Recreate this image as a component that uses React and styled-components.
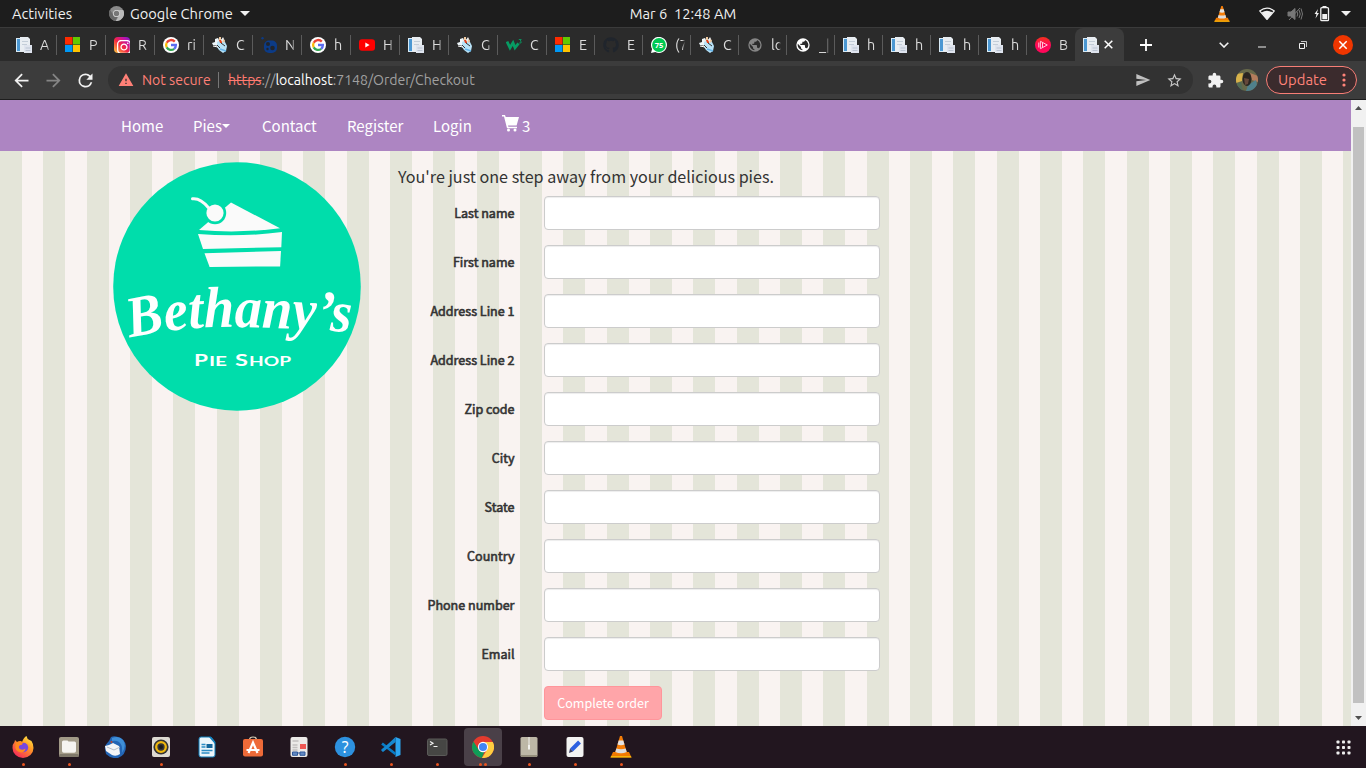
import React from "react";
import styled, { createGlobalStyle } from "styled-components";
import { FaGithub, FaInstagram } from "react-icons/fa";

const GlobalStyle = createGlobalStyle`
  * { box-sizing: border-box; }
  body { margin: 0; overflow: hidden; }
  svg { display: block; flex: none; }
`;

const uiFont = `Ubuntu, "Noto Sans", "Open Sans", sans-serif`;
const siteFont = `"Source Sans Pro", "Noto Sans CJK JP", sans-serif`;

const Desktop = styled.div`
  width: 1366px;
  height: 768px;
  display: flex;
  flex-direction: column;
  overflow: hidden;
  font-family: ${uiFont};
`;

/* ---------- system bar ---------- */
const SystemBar = styled.header`
  height: 27px;
  flex: none;
  background: #1d1d1d;
  color: #f0f0f0;
  display: grid;
  grid-template-columns: 1fr auto 1fr;
  align-items: center;
  font-size: 14.67px;
  line-height: 26px;
  white-space: pre;
`;
const SystemGroup = styled.div`
  display: flex;
  align-items: center;
  height: 27px;
`;
const Activities = styled.span`
  width: 97px;
  padding-left: 12px;
`;
const AppMenu = styled.span`
  margin: 0 5px 0 6px;
  width: 105px;
`;
const Tray = styled.div`
  display: flex;
  justify-content: flex-end;
  align-items: center;
  padding-right: 15px;
  height: 27px;
`;
const TrayItem = styled.span`
  margin-left: ${(p) => p.$gap}px;
`;

/* ---------- browser tabs ---------- */
const TabStrip = styled.div`
  height: 34px;
  flex: none;
  display: flex;
  padding-left: 8px;
  background: #2b2b2b;
  border-top: 1px solid #3b3b3b;
`;
const Tab = styled.div`
  width: ${(p) => p.$width}px;
  height: 33px;
  display: flex;
  align-items: center;
  padding: 0 0 0 8px;
  flex: none;
`;
const TabTitle = styled.span`
  margin-left: 8px;
  width: 10px;
  overflow: hidden;
  white-space: nowrap;
  color: #dcdcdc;
  font-size: 14.4px;
  line-height: 20px;
  mask-image: linear-gradient(to right, #000 70%, transparent);
`;
const TabDivider = styled.i`
  width: 1px;
  height: 20px;
  margin-left: auto;
  background: #5b5b5b;
`;
const ActiveTab = styled.div`
  width: 49px;
  height: 33px;
  flex: none;
  display: flex;
  align-items: center;
  gap: 5px;
  padding-left: 8px;
  background: #3c3c3c;
  border-radius: 8px 8px 0 0;
`;
const WindowControls = styled.div`
  flex: 1;
  display: flex;
  align-items: center;
  padding-left: 16px;
`;
const ControlGap = styled.span`
  width: ${(p) => p.$w}px;
`;

/* ---------- toolbar ---------- */
const Toolbar = styled.div`
  height: 39px;
  flex: none;
  display: flex;
  align-items: center;
  background: #3c3c3c;
  border-bottom: 1px solid #1e1e1e;
  padding-left: 11px;
  font-size: 14.1px;
`;
const NavButtons = styled.div`
  width: 97px;
  display: flex;
  gap: 11px;
`;
const Omnibox = styled.div`
  width: 1085px;
  height: 28px;
  border-radius: 14px;
  background: #323232;
  display: flex;
  align-items: center;
  padding: 0 10px 0 10px;
  line-height: 28px;
`;
const NotSecure = styled.span`
  width: 76px;
  margin-left: 8px;
  color: #ff8077;
`;
const OmniDivider = styled.i`
  width: 1px;
  height: 16px;
  margin-right: 9px;
  background: #777;
`;
const Url = styled.span`
  flex: 1;
  color: #a0a0a0;
`;
const Scheme = styled.span`
  color: #ff7a70;
  text-decoration: line-through;
`;
const Host = styled.span`
  color: #fff;
`;
const UpdateButton = styled.button`
  width: 91px;
  height: 28px;
  padding: 0 10px 0 11px;
  display: flex;
  align-items: center;
  justify-content: space-between;
  border: 1px solid #f77e76;
  border-radius: 14px;
  background: #3b2b2d;
  color: #ff8379;
  font: 14.8px/24px ${uiFont};
  margin-left: 8px;
`;

/* ---------- page ---------- */
const Viewport = styled.main`
  height: 626px;
  flex: none;
  display: flex;
`;
const Page = styled.div`
  width: 1351px;
  height: 626px;
  font-family: ${siteFont};
  background: linear-gradient(
      to right,
      #e4e5d9 22px, #f9f3f1 22px 43px, #e4e5d9 43px 65px, #f9f3f1 65px 87px,
      #e4e5d9 87px 109px, #f9f3f1 109px
    ) 0 0 / 130px 100%;
`;
const SiteNav = styled.nav`
  height: 51px;
  background: #ad85c2;
  display: flex;
  padding-left: 106px;
`;
const NavLink = styled.a`
  width: ${(p) => p.$width}px;
  padding: 0 15px;
  display: flex;
  align-items: center;
  white-space: nowrap;
  color: #fff;
  font-size: 15px;
  line-height: 51px;
`;
const CartIcon = styled.svg`
  margin: 0 3px 4px 0;
`;
const Columns = styled.div`
  display: flex;
  padding: 11px 0 0 113px;
`;
const Checkout = styled.section`
  margin-left: 37px;
  width: 482px;
`;
const Lead = styled.h4`
  margin: 0;
  height: 34px;
  font-size: 16.13px;
  line-height: 29px;
  font-weight: 400;
  color: #333;
  white-space: nowrap;
`;
const FormRow = styled.div`
  display: grid;
  grid-template-columns: 116.5px 336px;
  column-gap: 29.5px;
  height: 34px;
  margin-bottom: 15px;
`;
const Label = styled.label`
  text-align: right;
  font-size: 12.55px;
  line-height: 34px;
  font-weight: 400;
  color: #333;
  -webkit-text-stroke: 0.6px #333;
  white-space: nowrap;
`;
const Input = styled.input`
  width: 336px;
  height: 34px;
  border: 1px solid #ccc;
  border-radius: 4px;
  background: #fff;
  box-shadow: inset 0 1px 1px rgba(0, 0, 0, 0.075);
`;
const Submit = styled.button`
  grid-column: 2;
  width: 118px;
  height: 34px;
  padding: 0;
  border: 1px solid #ff959b;
  border-radius: 4px;
  background: #ffa5a9;
  color: #fff;
  font: 12.55px/32px ${siteFont};
`;
const Scrollbar = styled.div`
  width: 15px;
  background: #f1f1f1;
  display: flex;
  flex-direction: column;
  align-items: center;
  padding: 6px 0;
`;
const Thumb = styled.div`
  width: 11px;
  height: 576px;
  flex: none;
  margin: 17px 0 13px;
  background: #c1c1c1;
`;

/* ---------- dock ---------- */
const Dock = styled.footer`
  height: 42px;
  flex: none;
  display: flex;
  align-items: center;
  padding: 0 15px 0 4px;
  gap: 8px;
  background: #22161f;
`;
const DockItem = styled.div`
  width: 38px;
  height: 38px;
  padding-top: 8px;
  display: flex;
  flex-direction: column;
  align-items: center;
  border-radius: 4px;
  background: ${(p) => (p.$active ? "#4a4048" : "transparent")};
`;
const Dots = styled.span`
  display: flex;
  gap: 2px;
  margin-top: 5px;
`;
const Dot = styled.i`
  width: 3px;
  height: 3px;
  border-radius: 50%;
  background: #e95420;
`;
const Spacer = styled.span`
  flex: 1;
`;

/* ---------- small glyphs ---------- */
const Glyph = ({ d, size, color = "#f1f1f1" }) => (
  <svg width={size} height={size} viewBox="0 0 24 24" fill={color}><path d={d} /></svg>
);
const paths = {
  back: "M20 11H7.83l5.59-5.59L12 4l-8 8 8 8 1.41-1.41L7.83 13H20z",
  forward: "M4 11h12.17l-5.59-5.59L12 4l8 8-8 8-1.41-1.41L16.17 13H4z",
  reload: "M17.65 6.35A7.96 7.96 0 0 0 12 4a8 8 0 1 0 7.73 10h-2.08A6 6 0 1 1 12 6c1.66 0 3.14.69 4.22 1.78L13 11h7V4z",
  warning: "M1 21h22L12 2zm12-3h-2v-2h2zm0-4h-2v-4h2z",
  puzzle: "M20.5 11H19V7c0-1.1-.9-2-2-2h-4V3.5a2.5 2.5 0 0 0-5 0V5H4c-1.1 0-2 .9-2 2v3.8h1.5a2.7 2.7 0 0 1 0 5.4H2V20c0 1.1.9 2 2 2h3.8v-1.5a2.7 2.7 0 0 1 5.4 0V22H17c1.1 0 2-.9 2-2v-4h1.5a2.5 2.5 0 0 0 0-5z",
  star: "M22 9.24l-7.19-.62L12 2 9.19 8.63 2 9.24l5.46 4.73L5.82 21 12 17.27 18.18 21l-1.63-7.03zM12 15.4l-3.76 2.27 1-4.28-3.32-2.88 4.38-.38L12 6.1l1.71 4.04 4.38.38-3.32 2.88 1 4.28z",
  send: "M2 21L23 12 2 3v7l15 2-15 2z",
  globe: "M12 2a10 10 0 1 0 0 20 10 10 0 0 0 0-20zm-1 17.93A8 8 0 0 1 4.21 10.2L9 15v1c0 1.1.9 2 2 2zm6.9-2.54A2 2 0 0 0 16 16h-1v-3c0-.55-.45-1-1-1H8v-2h2c.55 0 1-.45 1-1V7h2c1.1 0 2-.9 2-2v-.41a8 8 0 0 1 2.9 12.8z",
};

const Triangle = ({ width = 10, height = 5, color = "#f1f1f1", up = false }) => (
  <svg width={width} height={height} viewBox="0 0 10 5" preserveAspectRatio="none">
    <path d={up ? "M0 5h10L5 0z" : "M0 0h10L5 5z"} fill={color} />
  </svg>
);
const Cone = ({ size }) => (
  <svg width={size} height={size} viewBox="0 0 22 22">
    <path d="M3 16h16l2.500 5.500H.5z" fill="#ef7900" />
    <path d="M1 20h20l.5 1.600H.5z" fill="#f6b50a" />
    <path d="M10 0h2l5 17q-6 3-12 0z" fill="#f47d08" />
    <path d="M8.700 4.600h4.600l1.200 4q-3.500 1.200-7 0z" fill="#e4e4e4" />
    <path d="M6.300 12.500q4.700 1.400 9.400 0l1 3.500q-5.700 2.400-11.400 0z" fill="#dcdcdc" />
  </svg>
);
const ChromeMark = ({ size, mono }) => {
  const c = mono ? ["#8a8a8a", "#686868", "#b9b9b9", "#777", "#ddd"] : ["#e33b2e", "#0f9d58", "#ffcd40", "#4285f4", "#fff"];
  return (
    <svg width={size} height={size} viewBox="0 0 24 24">
      <circle cx="12" cy="12" r="12" fill={c[0]} />
      <path d="M1.600 6L7.300 15A5.500 5.500 0 0 0 13.500 17.300L10.800 23.950A12 12 0 0 1 1.600 6z" fill={c[1]} />
      <path d="M12 6.500H22.700A12 12 0 0 1 10.800 23.950L16.700 14.800A5.500 5.500 0 0 0 12 6.500z" fill={c[2]} />
      <circle cx="12" cy="12" r="5.600" fill={c[4]} />
      <circle cx="12" cy="12" r="4.400" fill={c[3]} />
    </svg>
  );
};

/* ---------- favicons ---------- */
const Pages = () => (
  <svg width="16" height="16" viewBox="0 0 16 16">
    <path d="M0 1h5v14H0z" fill="#d9ebf6" />
    <path d="M1 2h3v12H1z" fill="#4b97d2" />
    <path d="M4 0h8l2 2v13H4z" fill="#e8edf2" />
    <path d="M6 4h6v1H6zM6 7h5v1H6z" fill="#c3cdd8" />
    <path d="M8 8h8v8H8z" fill="#dfe4ee" />
    <path d="M9.500 10.500h5v1h-5zM9.500 13h5v1h-5z" fill="#b9c3d1" />
  </svg>
);
const Squares = () => (
  <svg width="16" height="16" viewBox="0 0 16 16">
    <path d="M0 0h7.500v7.500H0z" fill="#ff2b00" /><path d="M8 0h7v7.500H8z" fill="#62c900" />
    <path d="M0 8h7.500v7H0z" fill="#0098f5" /><path d="M8 8h7v7H8z" fill="#ffc400" />
  </svg>
);
const Insta = () => (
  <svg width="16" height="16" viewBox="0 0 16 16">
    <defs><linearGradient id="ig" x1="0" y1="1" x2="1" y2="0"><stop stopColor="#ffd13f" /><stop offset=".45" stopColor="#f5273f" /><stop offset=".75" stopColor="#c512a4" /><stop offset="1" stopColor="#6d20d0" /></linearGradient></defs>
    <rect width="16" height="16" rx="4" fill="url(#ig)" />
    <FaInstagram x="2" y="2" width="12" height="12" color="#fff" />
  </svg>
);
const Gmark = () => (
  <svg width="16" height="16" viewBox="0 0 16 16" fill="none" strokeWidth="2.300">
    <circle cx="8" cy="8" r="8" fill="#fff" />
    <path d="M11.800 4.600A5 5 0 0 0 3.700 5.700" stroke="#ea4335" />
    <path d="M3.700 5.700a5 5 0 0 0 0 4.700" stroke="#fbbc05" />
    <path d="M3.700 10.400a5 5 0 0 0 7.500 1.400" stroke="#34a853" />
    <path d="M8 8h4.900a5 5 0 0 1-1.700 3.800" stroke="#5b6df0" />
  </svg>
);
const Genie = () => (
  <svg width="16" height="16" viewBox="0 0 16 16">
    <path d="M3 2l3-1 1 3-1 5-5-1-1-2 3-1z" fill="#eef6fa" />
    <path d="M5 5l3-3 4 1 3 6-1 5-3 2-4-3-2-3z" fill="#b8e2f7" />
    <path d="M7 0h2v3H7zM11 2l2 1-1 3-2-2z" fill="#f0c9a0" />
    <path d="M7 3h3v3H8z" fill="#e2411b" /><path d="M6 1l1 3-2 1zM11 0l1 2-2 3-1-2z" fill="#eee" />
    <path d="M9 6l4 3M5 8l3 3" stroke="#333" /><path d="M8 12l6 2" stroke="#65b5ea" strokeWidth="1.500" />
    <path d="M1 9l5 1" stroke="#fff" />
  </svg>
);
const Paw = () => (
  <svg width="16" height="16" viewBox="0 0 16 16">
    <rect x="3" y="3.500" width="13" height="12.500" rx="5" fill="#0c3b86" />
    <circle cx="1.500" cy="1.200" r="1.200" fill="#0c3b86" />
    <circle cx="7" cy="7" r="2" fill="#20242c" /><circle cx="11.500" cy="11" r="2.300" fill="#20242c" /><circle cx="6.500" cy="12" r="1.200" fill="#20242c" />
  </svg>
);
const Tube = () => (
  <svg width="16" height="16" viewBox="0 0 16 16"><rect y="2.300" width="16" height="11.400" rx="3" fill="#f00" /><path d="M6.300 5.600v4.800L10.600 8z" fill="#fff" /></svg>
);
const W3 = () => (
  <svg width="16" height="16" viewBox="0 0 16 16" fill="none" stroke="#079b63">
    <path d="M1 4.500l3 6.300 3-5 2 5 3.500-4.500" strokeWidth="2.800" /><path d="M12.800 2.500h2.400l-1 1.500 1 .6-.3 1.400h-1.700" strokeWidth=".9" />
  </svg>
);
const Hub = () => <FaGithub size={16} color="#20252c" />;
const Chat = () => (
  <svg width="16" height="16" viewBox="0 0 16 16">
    <path d="M0 16l1.100-4A8 8 0 1 1 4.300 15z" fill="#fff" /><circle cx="8" cy="8" r="6.900" fill="#00c853" />
    <text x="8" y="10.800" textAnchor="middle" fontFamily="Noto Sans" fontWeight="700" fontSize="7.500" fill="#fff">75</text>
  </svg>
);
const GlobeDim = () => <Glyph d={paths.globe} size={16} color="#858585" />;
const Globe = () => <Glyph d={paths.globe} size={16} color="#fff" />;
const Play = () => (
  <svg width="16" height="16" viewBox="0 0 16 16" fill="none">
    <defs><linearGradient id="pl" x2="0" y2="1"><stop stopColor="#f5311c" /><stop offset=".5" stopColor="#ff0759" /></linearGradient></defs>
    <circle cx="8" cy="8" r="8" fill="url(#pl)" />
    <path d="M5.400 4.300v7.400L12.300 8zM7.500 5.500v5M3.800 5.500v5" stroke="#ffc7da" strokeWidth="1" />
  </svg>
);

const tabs = [
  [Pages, "A"], [Squares, "P"], [Insta, "R"], [Gmark, "ri"], [Genie, "C"], [Paw, "N"], [Gmark, "h"], [Tube, "H"],
  [Pages, "H"], [Genie, "G"], [W3, "C"], [Squares, "E"], [Hub, "E"], [Chat, "(7"], [Genie, "C"], [GlobeDim, "lo"],
  [Globe, "_|"], [Pages, "h"], [Pages, "h"], [Pages, "h"], [Pages, "h"], [Play, "B"],
];

/* ---------- dock icons ---------- */
const Icon = ({ children }) => <svg width="22" height="22" viewBox="0 0 22 22">{children}</svg>;
const Firefox = () => (
  <Icon>
    <defs><linearGradient id="ff" x1=".9" y1="0" x2=".2" y2="1"><stop stopColor="#fff04a" /><stop offset=".4" stopColor="#ff9a25" /><stop offset="1" stopColor="#f5225d" /></linearGradient></defs>
    <path d="M3 4l2 2q2-1 4-1l1 1q2-5 4.500-6 .5 3 3 4l2 1q2 3 2 7a10.300 9.800 0 0 1-21 0q0-4 2-6z" fill="url(#ff)" />
    <circle cx="11.500" cy="11.500" r="4.700" fill="#7647df" />
    <path d="M4 6.500q4-2 7 0l-1 2.200q-3 0-3.500 2 .6 3 4 3 2-.4 3-1.200-.6 4-4.700 4-5-1-5.500-5z" fill="#ff8a20" />
  </Icon>
);
const Files = () => (
  <Icon>
    <rect x="1" y="1" width="20" height="20" rx="2" fill="#a29a87" /><rect x="1" y="18" width="20" height="3" rx="1.500" fill="#80796a" />
    <path d="M4 6q0-1.500 1.500-1.500h4l1 1h6q1.500 0 1.500 1.500v8q0 1.800-1.800 1.800H5.800Q4 16.800 4 15z" fill="#f6f4f0" />
  </Icon>
);
const Thunderbird = () => (
  <Icon>
    <path d="M7 1q3-1.500 7 0 7 2 8 9 0 9-8 12-7 1-12-4l-1-5Q0 10 5 5z" fill="#2365b5" />
    <path d="M8 2q7-3 11 2 4 6-1 13 1-8-3-11-3-2-7-1z" fill="#3f8fd8" />
    <path d="M1 10l4-1 4-2 6 3 1 8q-4 3-8 1L2 15z" fill="#f4f5f7" />
    <path d="M3 11l7 3 6-3" stroke="#b6bdc8" fill="none" /><circle cx="7.500" cy="6" r="1" fill="#c4432b" />
  </Icon>
);
const Speaker = () => (
  <Icon>
    <rect x="2" y="1" width="18" height="20" rx="2" fill="#dedad2" /><circle cx="11" cy="11" r="7.600" fill="#343434" />
    <circle cx="11" cy="11" r="4.800" fill="none" stroke="#efb70d" strokeWidth="2.300" /><circle cx="11" cy="11" r="2" fill="#191919" />
  </Icon>
);
const Writer = () => (
  <Icon>
    <path d="M3 3q0-2 2-2h10l4 5v13q0 2-2 2H5q-2 0-2-2z" fill="#edf5fa" stroke="#0d7cb9" strokeWidth="1" /><path d="M13 1h2l4 5v2z" fill="#0d7cb9" />
    <path d="M5.500 8.500h4M5.500 11h4M5.500 14.500h11M5.500 17h8" stroke="#2b8cc4" strokeWidth="1.400" /><path d="M10.500 8h6v4h-6z" fill="#12659b" />
  </Icon>
);
const Store = () => (
  <Icon>
    <path d="M7.500 4q0-3 3.500-3t3.500 3" stroke="#d9d0b8" fill="none" strokeWidth="1.200" /><rect x="1" y="3" width="20" height="17.500" rx="2" fill="#ee6a38" />
    <path d="M6.500 17L11 6.500 15.500 17M4.500 14h13" stroke="#fff" strokeWidth="2.200" fill="none" />
  </Icon>
);
const Reader = () => (
  <Icon>
    <rect x="2.500" y="1" width="17" height="20" rx="2" fill="#eceae8" /><path d="M4.500 5h6M4.500 9h5M4.500 11.500h5M4.500 14h5" stroke="#c2c0be" strokeWidth="1.300" />
    <path d="M12 8h6v5h-6z" fill="#ee5753" /><path d="M4.500 16h5v3.300h-5zM12 16h5v3.300h-5z" fill="#638ac4" stroke="#30599a" /><path d="M9.500 17H12" stroke="#30599a" />
  </Icon>
);
const Help = () => (
  <Icon>
    <circle cx="11" cy="11" r="10.200" fill="#2d91df" /><text x="11" y="16.500" textAnchor="middle" fontFamily="Noto Sans" fontSize="15.500" fill="#fff">?</text>
  </Icon>
);
const Code = () => (
  <Icon>
    <path d="M15.500 1l5 2v16l-5 2z" fill="#2ba5f0" /><path d="M2 7.500L15.500 18M2 14.500L15.500 4" stroke="#087bc4" strokeWidth="2.700" />
    <path d="M15.500 1v5L3 16l-1.800-1.500z" fill="#1688cf" />
  </Icon>
);
const Terminal = () => (
  <Icon>
    <rect x="1.500" y="3" width="19.500" height="16.500" rx="1.500" fill="#464644" stroke="#5b5b59" /><path d="M4 5.500l3 1.700-3 1.700M7.500 10.500h4" stroke="#f0f0f0" fill="none" strokeWidth="1.200" />
  </Icon>
);
const Archive = () => (
  <Icon>
    <rect x="2.500" y="1" width="17" height="20" rx="1.500" fill="#bdb7a6" /><path d="M3 20h16" stroke="#958e7c" strokeWidth="2" />
    <path d="M11 1.500v9" stroke="#f3f2ee" strokeWidth="2" strokeDasharray="1 1" /><path d="M10 9h2v4.500h-2z" fill="#f3f2ee" />
  </Icon>
);
const Editor = () => (
  <Icon>
    <rect x="2.500" y="1" width="17" height="20" rx="2" fill="#f3f3f2" /><path d="M7.500 14l8-8" stroke="#2c5fe0" strokeWidth="4" /><path d="M6 12.500l3 3-4 1.500z" fill="#373d60" />
  </Icon>
);
const dock = [
  [Firefox, 1], [Files, 1], [Thunderbird, 0], [Speaker, 1], [Writer, 0], [Store, 0], [Reader, 0], [Help, 1],
  [Code, 1], [Terminal, 1], [() => <ChromeMark size={22} />, 2, true], [Archive, 1], [Editor, 1], [() => <Cone size={22} />, 1],
];

const Logo = () => (
  <svg width="248" height="249" viewBox="0 0 248 249">
    <ellipse cx="124" cy="124.500" rx="123.800" ry="124.200" fill="#00ddab" />
    <g fill="#fafafa">
      <path d="M86 68L118 40.500 167 66.300Q126 71.500 86 68z" />
      <path d="M85 72Q127 75.500 169 70l-.7 15.200L90 87z" />
      <path d="M91.500 91.200L168 89l-.9 15.400-70.500.6z" />
    </g>
    <circle cx="102" cy="51" r="11.200" fill="#00ddab" />
    <circle cx="102" cy="51" r="8.600" fill="#fafafa" />
    <path d="M79.500 36.800q8-1 16 9" fill="none" stroke="#fafafa" strokeWidth="3" strokeLinecap="round" />
    <path id="name-line" d="M17 176Q60 165 116 165T246 171" fill="none" />
    <text fontFamily="Z003, Liberation Serif, serif" fontStyle="italic" fontWeight="700" fontSize="58" fill="#fff">
      <textPath href="#name-line" textLength="222" lengthAdjust="spacingAndGlyphs">Bethany’s</textPath>
    </text>
    <g fontFamily="Lato, sans-serif" fontWeight="700" fill="#fff">
      <text x="81" y="204" fontSize="17.500" textLength="14" lengthAdjust="spacingAndGlyphs">P</text>
      <text x="96" y="204" fontSize="14" textLength="18" lengthAdjust="spacingAndGlyphs">IE</text>
      <text x="122" y="204" fontSize="17.500" textLength="13" lengthAdjust="spacingAndGlyphs">S</text>
      <text x="136" y="204" fontSize="14" textLength="42" lengthAdjust="spacingAndGlyphs">HOP</text>
    </g>
  </svg>
);

const fields = ["Last name", "First name", "Address Line 1", "Address Line 2", "Zip code", "City", "State", "Country", "Phone number", "Email"];

export default function App() {
  return (
    <Desktop>
      <GlobalStyle />
      <SystemBar>
        <SystemGroup>
          <Activities>Activities</Activities>
          <TrayItem $gap={12}><ChromeMark size={15} mono /></TrayItem>
          <AppMenu>Google Chrome</AppMenu>
          <Triangle />
        </SystemGroup>
        <span>Mar 6  12:48 AM</span>
        <Tray>
          <Cone size={16} />
          <TrayItem $gap={29}>
            <svg width="16" height="13" viewBox="0 0 16 13">
              <path d="M.7 4Q8-1.800 15.300 4L8 12.500z" fill="none" stroke="#f1f1f1" strokeWidth="1.200" /><path d="M2.500 5.500Q8 1.800 13.500 5.500L8 12.500z" fill="#f1f1f1" />
            </svg>
          </TrayItem>
          <TrayItem $gap={12}>
            <svg width="16" height="14" viewBox="0 0 16 14" fill="none" stroke="#777">
              <path d="M1 5h3l4-3.500v11L4 9H1z" fill="#777" /><path d="M10 4.500q1.500 2.500 0 5M12 3q2.500 4 0 8M14 1.500q3 5.500 0 11M2 13L13 1" />
            </svg>
          </TrayItem>
          <TrayItem $gap={11}>
            <svg width="16" height="17" viewBox="0 0 16 17">
              <path d="M4 4L.5 9h2L1.500 13.500 5 8H3z" fill="#f1f1f1" /><rect x="6.800" y="2.700" width="7.700" height="13" rx="1" fill="none" stroke="#f1f1f1" strokeWidth="1.300" />
              <path d="M8.500 1h4v1.500h-4zM8.300 9h4.800v5.200H8.300z" fill="#f1f1f1" />
            </svg>
          </TrayItem>
          <TrayItem $gap={11}><Triangle /></TrayItem>
        </Tray>
      </SystemBar>

      <TabStrip>
        {tabs.map(([Favicon, title], i) => (
          <Tab key={i} $width={i < 11 ? 49 : 48}>
            <Favicon />
            <TabTitle>{title}</TabTitle>
            {i < tabs.length - 1 && <TabDivider />}
          </Tab>
        ))}
        <ActiveTab>
          <Pages />
          <svg width="9" height="9" viewBox="0 0 9 9" stroke="#fff" strokeWidth="1.500"><path d="M.7.7l7.600 7.600M8.300.7L.7 8.300" /></svg>
        </ActiveTab>
        <WindowControls>
          <svg width="12" height="12" viewBox="0 0 12 12" stroke="#fff" strokeWidth="1.800"><path d="M6 0v12M0 6h12" /></svg>
          <ControlGap $w={67} />
          <svg width="10" height="6" viewBox="0 0 10 6" fill="none" stroke="#f1f1f1" strokeWidth="1.600"><path d="M.7.7L5 5 9.300.7" /></svg>
          <ControlGap $w={29} />
          <svg width="8" height="6" viewBox="0 0 8 6"><path d="M0 4.500h8v1H0z" fill="#f1f1f1" /></svg>
          <ControlGap $w={33} />
          <svg width="8" height="8" viewBox="0 0 8 8" fill="none" stroke="#f1f1f1"><path d="M.5 2.500h5v5h-5z" /><path d="M2 .5h5.500V6" strokeWidth=".8" /></svg>
          <ControlGap $w={26} />
          <svg width="20" height="20" viewBox="0 0 20 20"><circle cx="10" cy="10" r="10" fill="#f03600" /><path d="M6.300 6.300l7.400 7.400m0-7.400l-7.400 7.400" stroke="#fff" strokeWidth="1.500" /></svg>
        </WindowControls>
      </TabStrip>

      <Toolbar>
        <NavButtons>
          <Glyph d={paths.back} size={21} />
          <Glyph d={paths.forward} size={21} color="#858585" />
          <Glyph d={paths.reload} size={21} />
        </NavButtons>
        <Omnibox>
          <Glyph d={paths.warning} size={16} color="#ff8077" />
          <NotSecure>Not secure</NotSecure>
          <OmniDivider />
          <Url><Scheme>https</Scheme>://<Host>localhost</Host>:7148/Order/Checkout</Url>
          <Glyph d={paths.send} size={16} color="#c0c0c0" />
          <ControlGap $w={15} />
          <Glyph d={paths.star} size={17} color="#c8c8c8" />
        </Omnibox>
        <ControlGap $w={14} />
        <Glyph d={paths.puzzle} size={17} />
        <ControlGap $w={12} />
        <svg width="22" height="22" viewBox="0 0 22 22">
          <defs><clipPath id="face"><circle cx="11" cy="11" r="11" /></clipPath></defs>
          <g clipPath="url(#face)">
            <path d="M0 0h22v22H0z" fill="#67694a" /><path d="M0 5l7-1-1 8-6 2z" fill="#d8b24a" /><path d="M14 4l8 3v6l-6-2z" fill="#b47c5c" />
            <path d="M5 13l-5 2v7h7z" fill="#526b56" /><path d="M12 16l8-5 2 11H10z" fill="#4f808b" />
            <ellipse cx="11" cy="10" rx="4.500" ry="7" fill="#2a2521" /><path d="M8 9l5 1-1 5-3 1z" fill="#65483a" />
          </g>
        </svg>
        <UpdateButton>
          Update
          <svg width="4" height="14" viewBox="0 0 4 14" fill="#ff8379"><circle cx="2" cy="2" r="1.600" /><circle cx="2" cy="7" r="1.600" /><circle cx="2" cy="12" r="1.600" /></svg>
        </UpdateButton>
      </Toolbar>

      <Viewport>
        <Page>
          <SiteNav>
            <NavLink $width={72}>Home</NavLink>
            <NavLink $width={69}>Pies<Triangle width={8} height={4} color="#fff" /></NavLink>
            <NavLink $width={85}>Contact</NavLink>
            <NavLink $width={86}>Register</NavLink>
            <NavLink $width={69}>Login</NavLink>
            <NavLink $width={70}>
              <CartIcon width="17" height="17" viewBox="0 0 17 17" fill="#fff">
                <path d="M0 0h3l.7 2H17l-2.400 8.500H6l.4 1.300H15v1.500H5L2 1.500H0z" /><circle cx="6.500" cy="15" r="1.500" /><circle cx="13" cy="15" r="1.500" />
              </CartIcon>
              3
            </NavLink>
          </SiteNav>
          <Columns>
            <Logo />
            <Checkout>
              <Lead>You're just one step away from your delicious pies.</Lead>
              {fields.map((name) => (
                <FormRow key={name}>
                  <Label>{name}</Label>
                  <Input />
                </FormRow>
              ))}
              <FormRow><Submit>Complete order</Submit></FormRow>
            </Checkout>
          </Columns>
        </Page>
        <Scrollbar>
          <Triangle width={7} height={4} color="#505050" up />
          <Thumb />
          <Triangle width={7} height={4} color="#505050" />
        </Scrollbar>
      </Viewport>

      <Dock>
        {dock.map(([Mark, dots, active], i) => (
          <DockItem key={i} $active={active}>
            <Mark />
            <Dots>{Array.from({ length: dots }, (_, n) => <Dot key={n} />)}</Dots>
          </DockItem>
        ))}
        <Spacer />
        <svg width="15" height="15" viewBox="0 0 15 15" fill="#eee">
          {[0, 1, 2].map((r) => [0, 1, 2].map((c) => <rect key={`${r}${c}`} x={0.5 + c * 5.5} y={0.5 + r * 5.5} width="3" height="3" rx=".8" />))}
        </svg>
      </Dock>
    </Desktop>
  );
}
